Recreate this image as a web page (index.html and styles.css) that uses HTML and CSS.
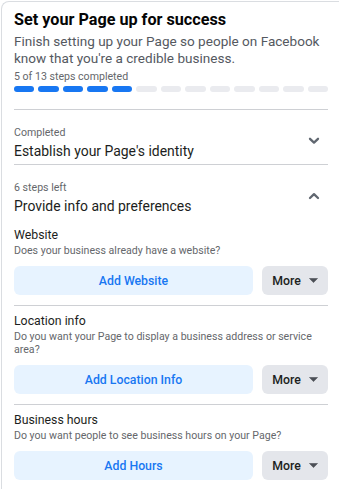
FILE: index.html
```html
<!DOCTYPE html>
<html lang="en">
<head>
    <meta charset="UTF-8">
    <meta name="viewport" content="width=device-width, initial-scale=1.0">
    <title>Set your Page up for success</title>
    <link rel="stylesheet" href="styles.css">
</head>
<body>
    <div class="card">
        <div class="intro">
            <h2 class="intro-title">Set your Page up for success</h2>
            <p class="intro-text">Finish setting up your Page so people on Facebook know that you're a credible business.</p>
            <div class="progress-label">5 of 13 steps completed</div>
            <div class="progress">
                <span class="seg done"></span>
                <span class="seg done"></span>
                <span class="seg done"></span>
                <span class="seg done"></span>
                <span class="seg done"></span>
                <span class="seg"></span>
                <span class="seg"></span>
                <span class="seg"></span>
                <span class="seg"></span>
                <span class="seg"></span>
                <span class="seg"></span>
                <span class="seg"></span>
                <span class="seg"></span>
            </div>
        </div>

        <div class="section">
            <div class="section-head">
                <div>
                    <div class="section-meta">Completed</div>
                    <div class="section-title">Establish your Page's identity</div>
                </div>
                <svg class="chevron" width="12" height="8" viewBox="0 0 12 8">
                    <path d="M2 1.8 L6 5.6 L10 1.8" fill="none" stroke="#606770" stroke-width="2.3" stroke-linecap="round" stroke-linejoin="round"/>
                </svg>
            </div>
        </div>

        <div class="section open">
            <div class="section-head">
                <div>
                    <div class="section-meta">6 steps left</div>
                    <div class="section-title">Provide info and preferences</div>
                </div>
                <svg class="chevron" width="12" height="8" viewBox="0 0 12 8">
                    <path d="M2 6 L6 2.2 L10 6" fill="none" stroke="#606770" stroke-width="2.3" stroke-linecap="round" stroke-linejoin="round"/>
                </svg>
            </div>

            <div class="steps">
                <div class="step">
                    <div class="step-title">Website</div>
                    <div class="step-text">Does your business already have a website?</div>
                    <div class="step-actions">
                        <button class="btn btn-primary">Add Website</button>
                        <button class="btn btn-more">More
                            <svg width="9" height="5" viewBox="0 0 9 5"><path d="M0.5 0.5 H8.5 L4.5 4.6 Z" fill="#4b4f56" stroke="#4b4f56" stroke-width="0.6" stroke-linejoin="round"/></svg>
                        </button>
                    </div>
                </div>

                <div class="step">
                    <div class="step-title">Location info</div>
                    <div class="step-text">Do you want your Page to display a business address or service area?</div>
                    <div class="step-actions">
                        <button class="btn btn-primary">Add Location Info</button>
                        <button class="btn btn-more">More
                            <svg width="9" height="5" viewBox="0 0 9 5"><path d="M0.5 0.5 H8.5 L4.5 4.6 Z" fill="#4b4f56" stroke="#4b4f56" stroke-width="0.6" stroke-linejoin="round"/></svg>
                        </button>
                    </div>
                </div>

                <div class="step">
                    <div class="step-title">Business hours</div>
                    <div class="step-text">Do you want people to see business hours on your Page?</div>
                    <div class="step-actions">
                        <button class="btn btn-primary">Add Hours</button>
                        <button class="btn btn-more">More
                            <svg width="9" height="5" viewBox="0 0 9 5"><path d="M0.5 0.5 H8.5 L4.5 4.6 Z" fill="#4b4f56" stroke="#4b4f56" stroke-width="0.6" stroke-linejoin="round"/></svg>
                        </button>
                    </div>
                </div>
            </div>
        </div>
    </div>
</body>
</html>
```

FILE: styles.css
```css
* {
    margin: 0;
    padding: 0;
    box-sizing: border-box;
}
body {
    font-family: Roboto, 'Liberation Sans', sans-serif;
    background-color: #fff;
    color: #1c1e21;
    overflow: hidden;
}
.card {
    width: 340px;
    margin: 1px 0 0 1px;
    padding: 0 13px 0 12px;
    background-color: #fff;
    border: 1px solid #dadde1;
    border-right: none;
    border-bottom: none;
    border-radius: 8px 0 0 0;
}
.intro {
    padding: 7px 0 17px;
}
.intro-title {
    font-size: 16.2px;
    font-weight: 700;
    line-height: 22px;
    color: #050505;
}
.intro-text {
    margin-top: 2px;
    font-size: 13.55px;
    line-height: 17px;
    color: #55595f;
}
.progress-label {
    margin-top: 3px;
    font-size: 10.6px;
    line-height: 14px;
    color: #65676b;
}
.progress {
    display: flex;
    gap: 4px;
    margin-top: 2px;
}
.seg {
    flex: 1;
    height: 6px;
    border-radius: 3px;
    background-color: #eaebef;
}
.seg.done {
    background-color: #1877f2;
}
.section {
    border-top: 1px solid #ced0d4;
}
.section-head {
    display: flex;
    justify-content: space-between;
    align-items: center;
    padding: 16px 0 2px;
}
.section-meta {
    font-size: 10.6px;
    line-height: 14px;
    color: #65676b;
}
.section-title {
    font-size: 13.95px;
    line-height: 22px;
    color: #1c1e21;
}
.chevron {
    margin: 0 8px 6px 0;
}
.steps {
    padding-top: 1px;
}
.step {
    padding: 6px 0 10px;
    border-bottom: 1px solid #ced0d4;
}
.step:last-child {
    border-bottom: none;
}
.step-title {
    font-size: 12.3px;
    line-height: 18px;
    color: #1c1e21;
}
.step-text {
    font-size: 10.6px;
    line-height: 13px;
    color: #65676b;
}
.step-actions {
    display: flex;
    gap: 9px;
    margin-top: 9px;
}
.btn {
    height: 29px;
    border: none;
    border-radius: 6px;
    font-family: inherit;
    font-size: 12.3px;
    font-weight: 500;
    cursor: pointer;
}
.btn-primary {
    flex: 1;
    background-color: #e7f3ff;
    color: #1877f2;
}
.btn-more {
    display: flex;
    align-items: center;
    justify-content: center;
    gap: 8px;
    width: 66px;
    background-color: #e4e6eb;
    color: #1c1e21;
}
```
